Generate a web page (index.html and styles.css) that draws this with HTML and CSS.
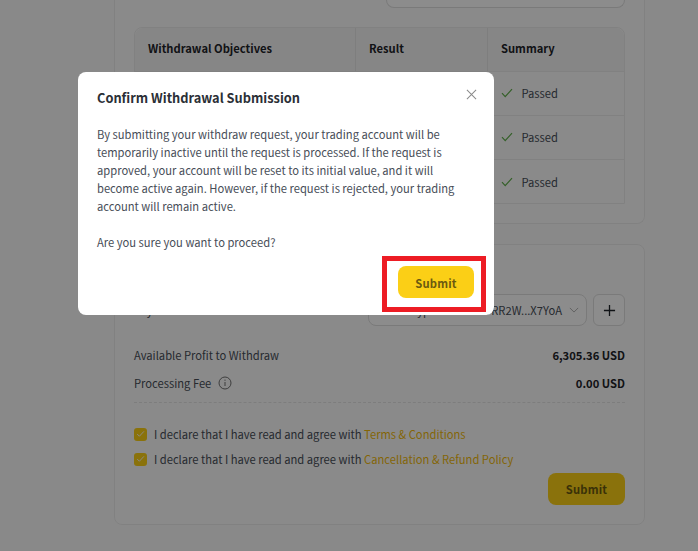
FILE: index.html
```html
<!DOCTYPE html>
<html lang="en">
<head>
<meta charset="utf-8">
<title>Confirm Withdrawal Submission</title>
<link rel="stylesheet" href="styles.css">
</head>
<body>
<main class="page">
  <section class="card card-top">
    <div class="stub-row"><div class="stub-input"></div></div>
    <div class="table">
      <div class="tr th"><div class="c c1">Withdrawal Objectives</div><div class="c c2">Result</div><div class="c c3">Summary</div></div>
      <div class="tr"><div class="c c1"></div><div class="c c2"></div><div class="c c3"><svg class="tick" viewBox="0 0 12 10"><path d="M1 5.2 4.2 8.6 11 1.2"/></svg>Passed</div></div>
      <div class="tr"><div class="c c1"></div><div class="c c2"></div><div class="c c3"><svg class="tick" viewBox="0 0 12 10"><path d="M1 5.2 4.2 8.6 11 1.2"/></svg>Passed</div></div>
      <div class="tr last"><div class="c c1"></div><div class="c c2"></div><div class="c c3"><svg class="tick" viewBox="0 0 12 10"><path d="M1 5.2 4.2 8.6 11 1.2"/></svg>Passed</div></div>
    </div>
  </section>

  <section class="card card-form">
    <div class="wallet-row">
      <div class="wallet-label">Pay to</div>
      <div class="select"><span class="select-text">Crypto Wallet - TRR2W...X7YoA</span><svg class="chev" viewBox="0 0 12 7"><path d="M1 1l5 5 5-5"/></svg></div>
      <div class="plus"><svg viewBox="0 0 14 14"><path d="M7 1v12M1 7h12"/></svg></div>
    </div>
    <div class="line"><span>Available Profit to Withdraw</span><b>6,305.36 USD</b></div>
    <div class="line fee"><span class="fee-label">Processing Fee<svg class="info" viewBox="0 0 14 14"><circle cx="7" cy="7" r="6"/><path d="M7 6v4M7 3.6v1.2"/></svg></span><b>0.00 USD</b></div>
    <div class="dash"></div>
    <label class="check"><span class="box"><svg viewBox="0 0 12 10"><path d="M1.5 5 4.5 8 10.5 1.5"/></svg></span>I declare that I have read and agree with&nbsp;<a>Terms &amp; Conditions</a></label>
    <label class="check"><span class="box"><svg viewBox="0 0 12 10"><path d="M1.5 5 4.5 8 10.5 1.5"/></svg></span>I declare that I have read and agree with&nbsp;<a>Cancellation &amp; Refund Policy</a></label>
    <div class="actions"><button class="btn btn-page">Submit</button></div>
  </section>
</main>

<div class="overlay"></div>

<div class="modal">
  <h2 class="modal-title">Confirm Withdrawal Submission</h2>
  <svg class="close" viewBox="0 0 12 12"><path d="M1 1l10 10M11 1 1 11"/></svg>
  <p class="modal-text">By submitting your withdraw request, your trading account will be temporarily inactive until the request is processed. If the request is approved, your account will be reset to its initial value, and it will become active again. However, if the request is rejected, your trading account will remain active.</p>
  <p class="modal-text ask">Are you sure you want to proceed?</p>
  <div class="modal-actions"><button class="btn btn-modal">Submit</button></div>
</div>
<div class="annotation"></div>
</body>
</html>
```
FILE: styles.css
```css
* { box-sizing: border-box; }
html, body { margin: 0; height: 100%; }
body {
  width: 698px;
  height: 551px;
  overflow: hidden;
  background: #fafafa;
  font-family: "Noto Sans CJK SC", "Noto Sans", sans-serif;
  font-size: 11.2px;
  color: #2b2f36;
}
.page { padding: 0 53px 0 114px; display: flex; flex-direction: column; gap: 20px; }
.card { border: 1px solid #ececec; border-radius: 8px; background: #fcfcfc; padding: 0 19px; }
.card-top { height: 224px; border-top: 0; border-top-left-radius: 0; border-top-right-radius: 0; }
.stub-row { display: flex; justify-content: flex-end; height: 27px; }
.stub-input { width: 239px; height: 8px; border: 1px solid #dedede; border-top: 0; border-radius: 0 0 8px 8px; background: #fff; }
.table { border: 1px solid #ececec; border-radius: 8px 8px 0 0; height: 177px; }
.tr { display: flex; height: 44px; border-bottom: 1px solid #ececec; color: #474d57; }
.tr.last { border-bottom: 0; }
.th { font-weight: 700; color: #1e2329; background: #f5f5f5; border-radius: 8px 8px 0 0; }
.c { display: flex; align-items: center; padding-left: 13px; height: 100%; padding-bottom: 1px; }
.th .c { padding-bottom: 4px; }
.c1 { width: 221px; }
.c2 { width: 132px; }
.c3 { flex: 1; }
.th .c1, .th .c2 { border-right: 1px solid #e6e6e6; }
.tick { width: 12px; height: 10px; margin-right: 8.5px; fill: none; stroke: #5fae4a; stroke-width: 1.2; }
.card-form { height: 281px; padding-top: 49px; }
.wallet-row { display: flex; align-items: center; height: 32px; }
.wallet-label { width: 234px; color: #474d57; }
.select { width: 219px; height: 32px; border: 1px solid #dedede; border-radius: 8px; display: flex; align-items: center; justify-content: flex-end; padding: 0 7px 0 0; gap: 7px; overflow: hidden; white-space: nowrap; background: #fff; }
.select-text { color: #474d57; }
.chev { width: 10px; height: 6px; fill: none; stroke: #aaa; stroke-width: 1.1; flex: none; }
.plus { margin-left: 6px; width: 32px; height: 32px; border: 1px solid #dedede; border-radius: 6px; display: flex; align-items: center; justify-content: center; background: #fff; }
.plus svg { width: 13px; height: 13px; fill: none; stroke: #1e2329; stroke-width: 1.4; }
.line { display: flex; justify-content: space-between; align-items: center; height: 20px; margin-top: 19px; color: #474d57; }
.line b { color: #1e2329; font-weight: 700; }
.line.fee { margin-top: 8px; }
.fee-label { display: flex; align-items: center; gap: 7px; }
.info { width: 14px; height: 14px; fill: none; stroke: #707070; stroke-width: 1; }
.dash { border-top: 1px dashed #e4e4e4; margin: 9px 0 22px; }
.check { display: flex; align-items: center; height: 18px; margin-bottom: 7px; color: #474d57; white-space: nowrap; }
.check:last-of-type { margin-bottom: 5px; }
.check a { color: #f0b90b; }
.box { width: 13px; height: 13px; border-radius: 3px; background: #fcd015; margin-right: 7px; display: flex; align-items: center; justify-content: center; }
.box svg { width: 9px; height: 8px; fill: none; stroke: #fff; stroke-width: 1.2; }
.actions { display: flex; justify-content: flex-end; }
.btn { border: 0; border-radius: 8px; background: #fbcf16; color: #6b5a10; font-family: inherit; font-size: 11.2px; font-weight: 700; letter-spacing: .2px; height: 32px; padding: 0; }
.btn-page { width: 77px; }
.btn-modal { width: 76px; padding-top: 2px; }
.overlay { position: fixed; inset: 0; background: rgba(0, 0, 0, .45); }
.modal { position: fixed; left: 78px; top: 72px; width: 416px; height: 243px; background: #fff; border-radius: 8px; padding: 16px 20px 0 19px; }
.modal-title { margin: 0; font-size: 12.8px; line-height: 20px; font-weight: 700; color: #2b2f36; }
.close { position: absolute; left: 388px; top: 17px; width: 11px; height: 11px; fill: none; stroke: #8a8a8a; stroke-width: 1.1; }
.modal-text { margin: 17px 0 0; font-size: 11.2px; line-height: 18px; color: #474d57; width: 372px; }
.modal-text.ask { margin-top: 18px; }
.modal-actions { display: flex; justify-content: flex-end; padding-top: 15px; }
.annotation { position: fixed; left: 382px; top: 256px; width: 104px; height: 56px; border: 5px solid #ed1c24; }
```
